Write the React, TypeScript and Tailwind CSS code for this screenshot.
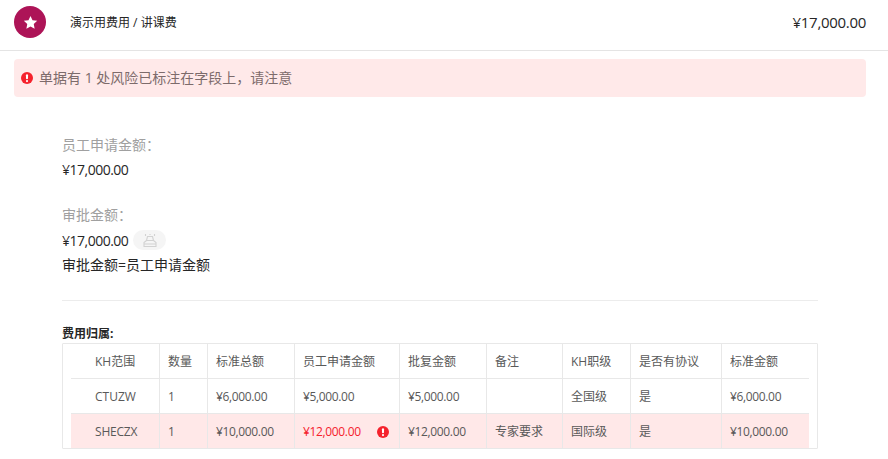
const headers = ["KH范围", "数量", "标准总额", "员工申请金额", "批复金额", "备注", "KH职级", "是否有协议", "标准金额"];
const widths = ["w-[88px]", "w-[48px]", "w-[87px]", "w-[105px]", "w-[87px]", "w-[76px]", "w-[68px]", "w-[91px]", "w-[88px]"];
const row1 = ["CTUZW", "1", "¥6,000.00", "¥5,000.00", "¥5,000.00", "", "全国级", "是", "¥6,000.00"];
const row2 = ["SHECZX", "1", "¥10,000.00", "¥12,000.00", "¥12,000.00", "专家要求", "国际级", "是", "¥10,000.00"];

function Alert({ className }: { className: string }) {
  return (
    <svg viewBox="0 0 14 14" className={className}>
      <circle cx="7" cy="7" r="7" fill="#f5222d" />
      <rect x="5.8" y="2.6" width="2.4" height="5.8" rx="1.2" fill="#fff" />
      <circle cx="7" cy="10.6" r="1.25" fill="#fff" />
    </svg>
  );
}

function Cell({ text, i, red }: { text: string; i: number; red?: boolean }) {
  const tight = text.startsWith("¥");
  const slight = text === "SHECZX";
  return (
    <td className={`h-[35px] p-0 pt-[2px] pr-2 border-b border-[#e8e8e8] align-middle overflow-hidden whitespace-nowrap ${i === 0 ? "pl-6" : "pl-2 border-l"} ${red ? "text-[#f5222d]" : ""} ${tight ? "tracking-[-0.35px]" : ""} ${slight ? "tracking-[-0.2px]" : ""}`}>
      {red ? (
        <div className="flex items-center justify-between pr-[2px]">
          <span>{text}</span>
          <Alert className="w-3 h-3" />
        </div>
      ) : (
        text
      )}
    </td>
  );
}

export default function App() {
  return (
    <div className="w-[888px] h-[459px] overflow-hidden bg-white text-[#262626] text-[14px] font-['Open_Sans','Noto_Sans_CJK_SC',sans-serif]">
      <header className="h-[51px] border-b border-[#e4e4e4] pl-[14px] pr-[22px] pb-[6px] flex items-center justify-between">
        <div className="flex items-center">
          <div className="w-8 h-8 rounded-full bg-[#ad1457] flex items-center justify-center">
            <svg viewBox="0 0 24 24" className="w-[15px] h-[15px]" fill="#fff">
              <path d="M12 1.5l3.2 6.9 7.5.9-5.5 5.2 1.4 7.4L12 18.2l-6.6 3.7 1.4-7.4L1.3 9.3l7.5-.9z" />
            </svg>
          </div>
          <span className="ml-6 mt-[2px] text-xs">演示用费用 / 讲课费</span>
        </div>
        <span className="text-[15px] tracking-[-0.3px]">¥17,000.00</span>
      </header>

      <div className="ml-[14px] mr-[22px] mt-2 h-[38px] rounded bg-[#ffe9e9] flex items-center pl-[7px] text-[#7d6b6b]">
        <Alert className="w-3 h-3 mr-[6px]" />
        <span className="pb-[1px]">单据有 1 处风险已标注在字段上，请注意</span>
      </div>

      <main className="ml-[62px] w-[756px] mt-[38px]">
        <div className="h-[20px] leading-[20px] text-[#a0a0a0]">员工申请金额：</div>
        <div className="mt-[5px] h-[20px] leading-[20px] tracking-[-0.5px]">¥17,000.00</div>
        <div className="mt-[25px] h-[20px] leading-[20px] text-[#a0a0a0]">审批金额：</div>
        <div className="mt-[5px] h-[20px] flex items-center">
          <span className="tracking-[-0.5px]">¥17,000.00</span>
          <span className="ml-[5px] w-[33px] h-5 rounded-full bg-[#f5f5f5] flex items-center justify-center">
            <svg viewBox="0 0 14 13" className="w-[14px] h-[13px]" fill="none" stroke="#d2d2d2" strokeWidth="1.1">
              <path d="M2.5 0v2M11.5 0v2M7 0v1M4 2.5h6M4.5 2.5L3.5 6.5h7l-1-4M3.5 6.5L1 8.5v4h12v-4l-2.5-2M1 10h12" />
            </svg>
          </span>
        </div>
        <div className="mt-[5px] h-5 leading-5">审批金额=员工申请金额</div>
        <div className="mt-[25px] border-t border-[#ececec]" />
        <div className="mt-[25px] h-[16px] leading-[16px] text-xs font-bold">费用归属:</div>
        <div className="border border-[#e8e8e8] rounded-[1px] px-2 h-[106px] mt-[1px] text-xs text-[#595959]">
          <table className="table-fixed border-separate border-spacing-0 w-[738px]">
            <colgroup>
              {widths.map((w, i) => (
                <col key={i} className={w} />
              ))}
            </colgroup>
            <tbody>
              <tr>{headers.map((t, i) => <Cell key={i} text={t} i={i} />)}</tr>
              <tr>{row1.map((t, i) => <Cell key={i} text={t} i={i} />)}</tr>
              <tr className="bg-[#ffe8e8]">{row2.map((t, i) => <Cell key={i} text={t} i={i} red={i === 3} />)}</tr>
            </tbody>
          </table>
        </div>
      </main>
    </div>
  );
}
